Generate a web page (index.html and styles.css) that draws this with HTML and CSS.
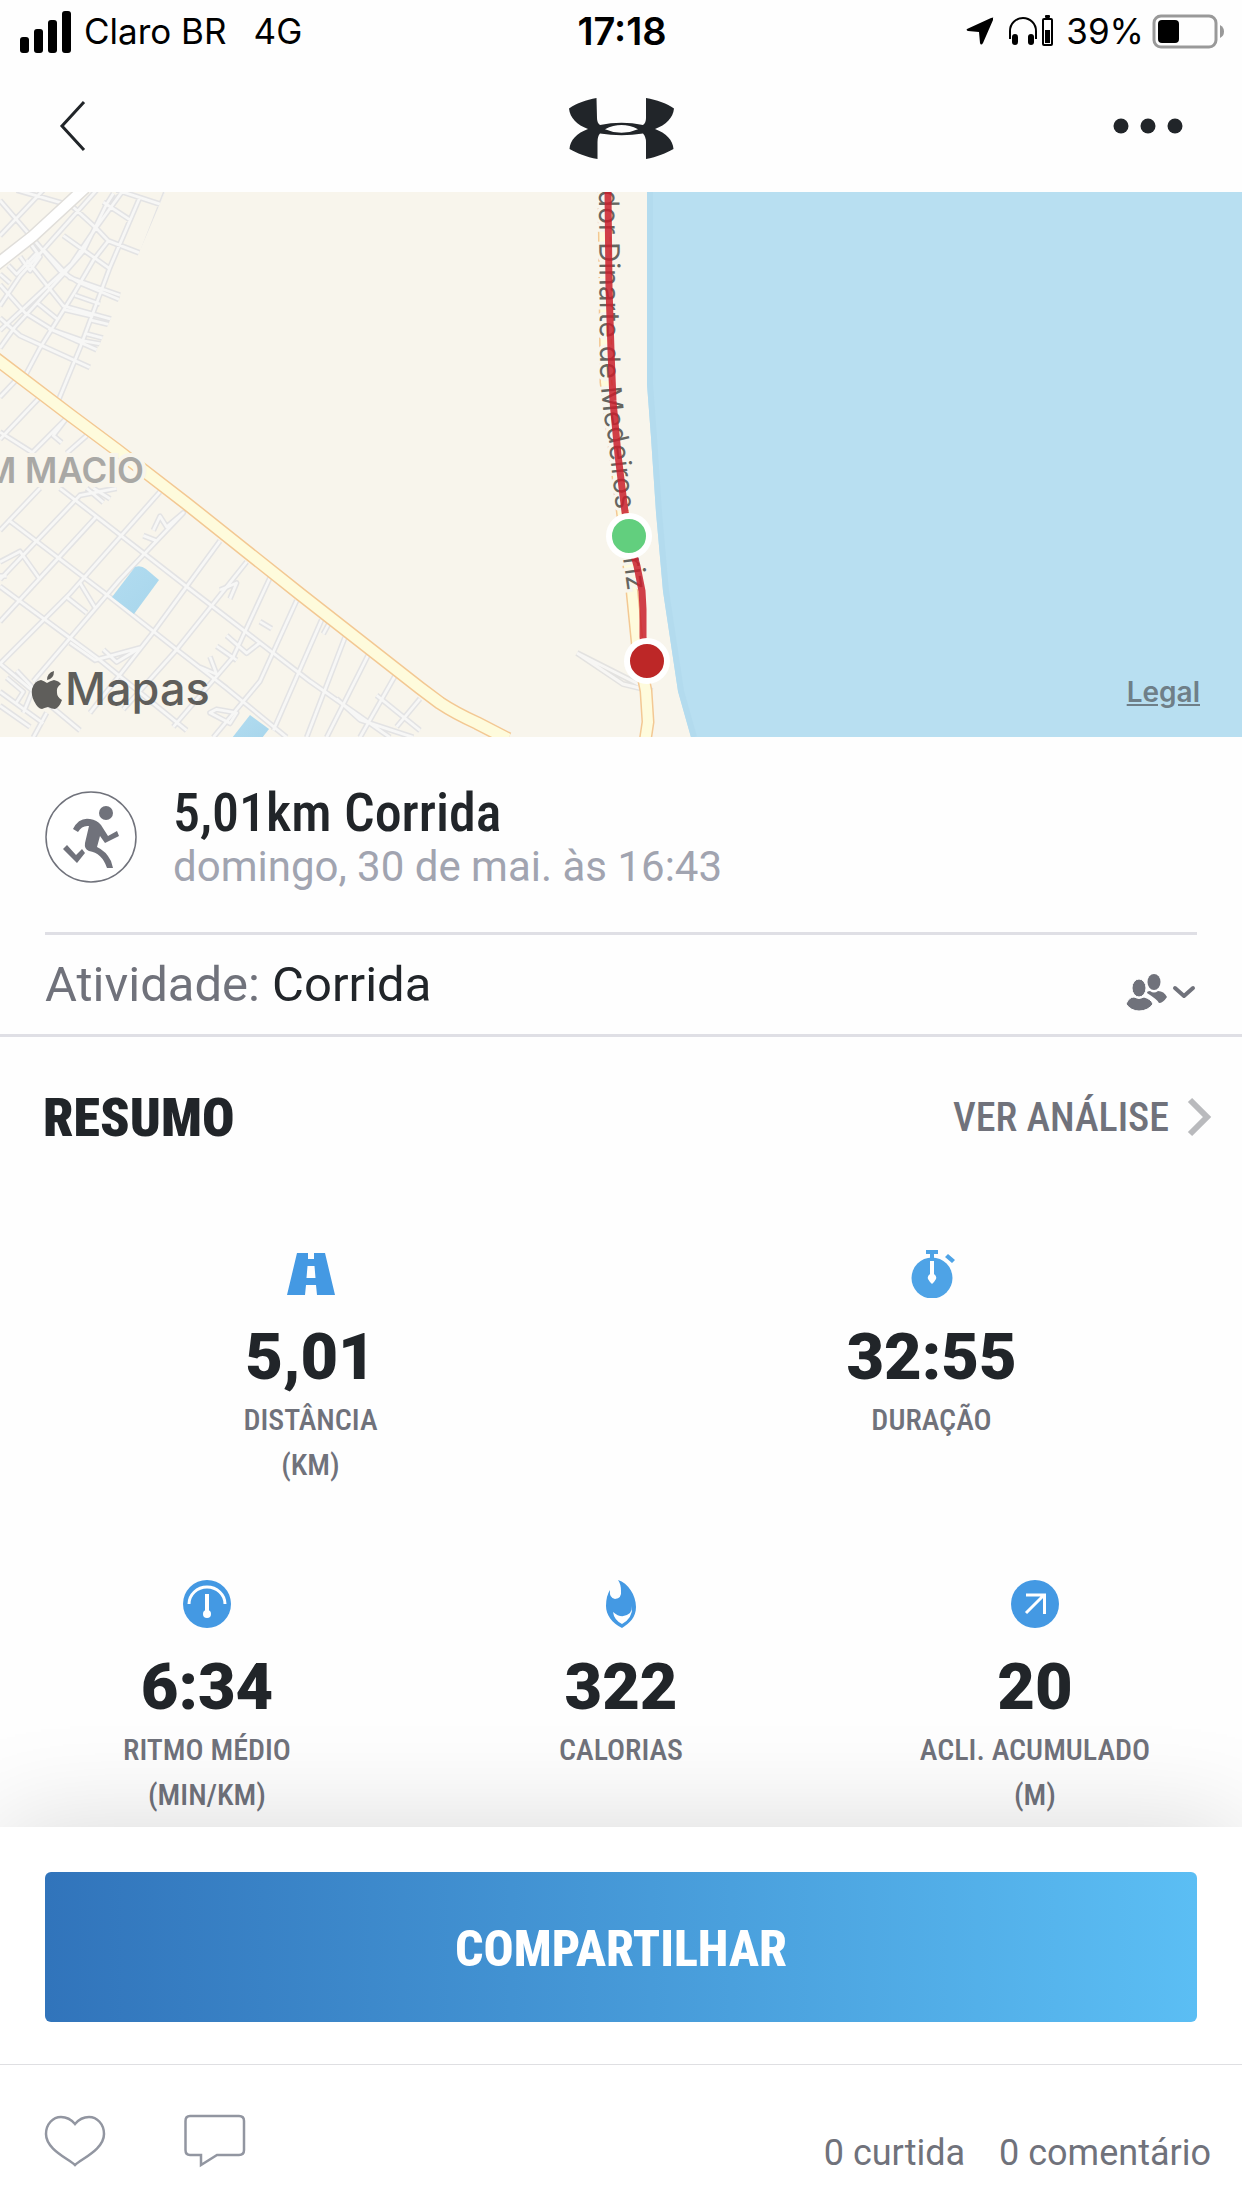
FILE: index.html
```html
<!DOCTYPE html>
<html lang="pt-BR">
<head>
<meta charset="utf-8">
<meta name="viewport" content="width=device-width, initial-scale=1">
<title>5,01km Corrida</title>
<link rel="stylesheet" href="styles.css">
</head>
<body>
<div class="status">
  <div class="status-left">
    <svg width="51" height="43" viewBox="0 0 51 43" aria-hidden="true"><rect x="0" y="27" width="9" height="16" rx="3"/><rect x="14" y="19" width="9" height="24" rx="3"/><rect x="28" y="10" width="9" height="33" rx="3"/><rect x="42" y="1" width="9" height="42" rx="3"/></svg>
    <span>Claro BR</span><span class="network">4G</span>
  </div>
  <time class="clock">17:18</time>
  <div class="status-right">
    <svg width="28" height="28" viewBox="0 0 28 28" aria-hidden="true"><path d="M27 1Q28 0 25 1L1 12Q0 13 2 14L13 15L14 26Q15 29 17 26L27 3Z"/></svg>
    <svg class="headphones" width="46" height="32" viewBox="0 0 46 32" aria-hidden="true"><path d="M2 24V16a13 13 0 0 1 26 0v8" fill="none" stroke="#000" stroke-width="2"/><rect x="4" y="19" width="6" height="11" rx="3"/><rect x="20" y="19" width="6" height="11" rx="3"/><rect x="35" y="4" width="9" height="26" rx="1" fill="none" stroke="#000" stroke-width="2"/><rect x="37" y="15" width="5" height="13"/><rect x="37" y="0" width="5" height="3" rx="1"/></svg>
    <span>39%</span>
    <svg width="72" height="35" viewBox="0 0 72 35" aria-hidden="true"><rect x="2" y="2" width="62" height="31" rx="7" fill="none" stroke="#999" stroke-width="3"/><rect x="6" y="6" width="21" height="23" rx="4"/><path d="M68 11q4 2 4 6.500t-4 6.500z" fill="#999"/></svg>
  </div>
</div>
<header class="nav">
  <button class="icon-button back" aria-label="Voltar"><svg width="28" height="52" viewBox="0 0 28 52"><path d="M25 2L3 26L25 50" fill="none" stroke="#212529" stroke-width="3"/></svg></button>
  <svg class="logo" width="105" height="61" viewBox="0 0 105 61" role="img" aria-label="Under Armour"><path fill="#212529" fill-rule="evenodd" d="M27.500 0C17 2 8 5 0 10.500C1 20 8 27 19 31C8 35 1 42 .5 51C8 55 17 59 28.500 61V44Q28.500 38 31 35.500Q52.500 39 74 35.500Q77 39 77 44V61C88 59 97 55 104.500 51C104 42 97 35 86 31C97 27 104 20 105 10.500C97 5 88 2 77 0V20Q77 25 74 27Q52.500 22.500 31 27Q28 25 28 20ZM36 31.200Q52.500 23 69 31.200Q52.500 38.500 36 31.200Z"/></svg>
  <button class="icon-button more" aria-label="Mais opções"><svg width="70" height="16" viewBox="0 0 70 16" fill="#212529"><circle cx="8" cy="8" r="7.500"/><circle cx="35" cy="8" r="7.500"/><circle cx="62" cy="8" r="7.500"/></svg></button>
</header>
<main>
<section class="map" aria-label="Mapa do percurso">
<svg class="map-canvas" viewBox="0 0 1242 545">
  <defs>
    <g id="streets">
      <path d="M0 400L215 210L290 105L370 0M0 330L60 245L290 0M0 130L130 0M0 30L100 140L180 230L240 265L365 315M0 270L75 350L160 400L290 455M0 365L60 415L280 510M0 450L45 390L190 240L250 175L320 40L340 10M50 0L215 45L290 110L325 145L420 180M310 35L390 85M500 0L370 320L225 640M420 20L330 220L240 450L175 600M350 0L480 40M190 130L330 225M80 200L190 330L360 375M130 170L210 250L360 300M75 530L120 450L225 290L280 200L325 145M25 215L50 240L110 180M0 240L30 265M90 150L120 190L90 230L60 190M110 320L175 370M145 395L250 430L310 440M270 370L335 385M260 410L320 425M190 340L280 360M225 300L300 325"/>
      <path d="M0 590L60 530M0 710L120 590M95 750L200 650L160 700L185 720M200 750L260 700M0 690L100 750M0 970L120 850M0 1110L240 870L350 850M0 1230L290 930M0 1350L210 1150L480 860M100 1400L360 1110L550 920L500 960L480 930L460 970M430 985L470 1000M270 1490L460 1260L660 1000M370 1480L530 1310L740 1060M520 1530L700 1330L810 1105M640 1560L780 1400L890 1170M820 1540L965 1225M920 1560L1035 1275M980 1560L1105 1325M1080 1560L1185 1385M1190 1530L1260 1450"/>
      <path d="M180 850L560 1130L930 1400L1170 1560M25 940L330 1160L530 1310L680 1420L860 1560M0 1060L60 1030L120 1110M0 1130L300 1340L560 1540M0 1350L240 1540M0 1100L20 1100M200 1160L260 1205M240 1120L285 1190M210 1290L285 1340L420 1305L350 1345L310 1310M280 850L330 880M260 850L310 890M680 1270L740 1320L780 1290M650 1300L710 1340M660 1140L710 1120L690 1165M780 1230L815 1250M970 1265L990 1230M630 1490L690 1520L710 1490L650 1480ZM600 1360L650 1380L630 1330M1010 1450L1080 1510L1240 1560M1130 1440L1260 1540M0 1430L130 1520M20 1390L70 1430L50 1460M50 1370L100 1420L70 1490M0 1470L90 1530M140 1490L100 1560"/>
    </g>
    <path id="diagonal" d="M-5 166L70 223L117 258L187 312L300 402L420 496L440 511Q455 521 477 531L508 547"/>
    <path id="coastal" d="M604 0L606 190L620 300L632 399L638 459L646 499L648 530L645 550"/>
    <path id="pier" d="M577 461L623 492L652 499L577 461"/>
    <path id="road-label" d="M599 -2L600 174Q602 220 608 245L616 315L632 430"/>
    <clipPath id="inland"><path d="M0 0H165L72 217L120 254L430 512L500 545H0Z"/></clipPath>
    <linearGradient id="pool" x2="1" y2="1"><stop stop-color="#b2dcf0"/><stop offset="1" stop-color="#a8d6ec"/></linearGradient>
  </defs>
  <rect width="1242" height="545" fill="#f8f5ec"/>
  <path d="M647 0V192L651 245L656 320L663 399L678 499L691 545H1242V0Z" fill="#b8dff1"/>
  <path d="M650 0V192L654 245L659 320L666 399L681 499L694 545" fill="none" stroke="#b3dbee" stroke-width="6"/>
  <g clip-path="url(#inland)" fill="none" stroke-linejoin="round">
    <use href="#streets" transform="translate(0 -2) scale(.3333 .3509)" stroke="#e3e3e4" stroke-width="17"/>
    <use href="#streets" transform="translate(0 -2) scale(.3333 .3509)" stroke="#f7f7f6" stroke-width="8"/>
  </g>
  <path d="M112 405L135 375Q141 373 146 377L159 388L134 422Z" fill="url(#pool)"/>
  <path d="M232 546L250 523L269 537L262 546Z" fill="url(#pool)"/>
  <g fill="none">
    <path d="M-4 73L33 44L85 -4" stroke="#e0deda" stroke-width="13"/>
    <path d="M-4 73L33 44L85 -4" stroke="#fff" stroke-width="10"/>
    <use href="#pier" stroke="#e3e2e0" stroke-width="6"/><use href="#pier" stroke="#f7f6f4" stroke-width="3"/>
    <use href="#diagonal" stroke="#f3c893" stroke-width="14"/><use href="#diagonal" stroke="#fefbdc" stroke-width="11"/>
    <use href="#coastal" stroke="#f3c893" stroke-width="13"/><use href="#coastal" stroke="#fefbdc" stroke-width="10"/>
  </g>
  <text class="district" x="-16" y="291">M MACIO</text>
  <text class="road"><textPath href="#road-label">dor Dinarte de Medeiros Mariz</textPath></text>
  <path d="M608 0L609 95L611 159L613 209L618 263L625 320L629 345L637 374L642 399L643 417L643 445L646 469" fill="none" stroke="#c91e2b" stroke-opacity=".85" stroke-width="7"/>
  <g stroke="#fff" stroke-width="6"><circle cx="629" cy="344" r="20" fill="#62cf7e"/><circle cx="647" cy="469" r="20" fill="#bd2727"/></g>
  <g fill="#5f5e5b"><path d="M54 479Q54 487 47 488Q47 481 54 479ZM47 491Q50 489 54 488Q59 489 61 492Q56 495 57 501Q57 505 62 508Q59 516 55 517Q52 517 48 515Q44 516 42 517Q38 517 34 509Q31 503 32 497Q34 489 41 488Q44 489 47 491Z"/><text class="brand" x="65" y="513">Mapas</text></g>
</svg>
<a class="legal" href="#legal">Legal</a>
</section>

<section class="workout">
  <svg width="92" height="92" viewBox="0 0 92 92" aria-hidden="true"><circle cx="46" cy="46" r="45" fill="#fff" stroke="#70727b" stroke-width="1.500"/><g fill="#70727b"><circle cx="61" cy="22" r="7"/><path d="M28 38Q34 26 45 28Q52 29 56 34L63 45L72 40L74 45L60 52L55 45L52 56Q61 60 66 70L68 77H62Q57 62 44 60Q39 58 40 52L44 35Q37 34 33 41Z"/><path d="M18 58L22 54L31 64L37 58L40 62L32 72Z"/></g></svg>
  <div class="workout-text"><h1>5,01km Corrida</h1><p>domingo, 30 de mai. às 16:43</p></div>
</section>
<section class="activity">
  <p>Atividade: <strong>Corrida</strong></p>
  <button class="icon-button privacy" aria-label="Privacidade"><svg width="72" height="38" viewBox="-2 0 72 38"><g fill="#70727b"><ellipse cx="27" cy="9" rx="6.500" ry="8"/><path d="M20 20Q31 27 32 30Q36 30 40 24Q37 18 31 18Q27 21 23 18Q20 18 20 20Z"/><g stroke="#fff"><ellipse cx="12" cy="15" rx="7" ry="9"/><path d="M-1 31Q2 24 7 24Q12 27 17 24Q24 26 26 31Q21 38 12 38Q4 38-1 31Z"/></g></g><path d="M48 15L57 23L66 15" fill="none" stroke="#70727b" stroke-width="4" stroke-linecap="round" stroke-linejoin="round"/></svg></button>
</section>

<section class="summary">
  <div class="summary-head"><h2>Resumo</h2><a href="#analise">Ver análise<svg width="25" height="40" viewBox="0 0 25 40" aria-hidden="true"><path d="M3 3L20 20L3 37" fill="none" stroke="#b9babd" stroke-width="6"/></svg></a></div>
  <div class="stats stats-two">
    <div class="stat"><svg width="48" height="48" viewBox="0 0 48 48" aria-hidden="true"><path fill="#4499e3" fill-rule="evenodd" d="M10 3H21V9H27V3H38L48 45H30L29 35H19L18 45H0ZM20.500 16L19.500 28H28.500L27.500 16Z"/></svg><b>5,01</b><span>Distância<br>(km)</span></div>
    <div class="stat"><svg width="48" height="48" viewBox="0 0 48 48" aria-hidden="true"><g fill="#4ea3e6"><circle cx="24" cy="28" r="20.500"/><path d="M18 0H30V4H26V9H22V4H18ZM40 4L47 10L44 13L37 7Z"/></g><path fill="#fff" d="M22 11H26V24Q29 26 28 29L26 32L24 34L22 32L20 29Q19 26 22 24Z"/></svg><b>32:55</b><span>Duração</span></div>
  </div>
  <div class="stats stats-three">
    <div class="stat"><svg width="48" height="48" viewBox="0 0 48 48" aria-hidden="true"><circle cx="24" cy="24" r="24" fill="#4499e3"/><path d="M6 24a18 17 0 0 1 36 0" fill="none" stroke="#fff" stroke-width="3"/><path d="M24 14V33" stroke="#fff" stroke-width="4"/><circle cx="24" cy="34" r="4" fill="#fff"/></svg><b>6:34</b><span>Ritmo médio<br>(min/km)</span></div>
    <div class="stat"><svg width="48" height="48" viewBox="0 0 48 48" aria-hidden="true"><path fill="#4499e3" d="M21 0C31 3 39 15 39 27C39 37 33 43 25 48C15 43 9 35 9 26Q9 16 13 10Q12 18 18 19Q25 18 24 11Q24 4 21 0Z"/><path fill="#fff" d="M16 32Q25 40 33 33Q35 30 35 26Q36 38 25 44Q17 40 16 32Z"/></svg><b>322</b><span>Calorias</span></div>
    <div class="stat"><svg width="48" height="48" viewBox="0 0 48 48" aria-hidden="true"><circle cx="24" cy="24" r="24" fill="#4499e3"/><path d="M15 15H33.500V34M33 15L15 33" fill="none" stroke="#fff" stroke-width="3"/></svg><b>20</b><span>Acli. acumulado<br>(m)</span></div>
  </div>
</section>
</main>
<footer class="sheet">
  <div class="share"><button class="share-button">Compartilhar</button></div>
  <div class="social">
    <div class="social-actions">
      <button class="icon-button" aria-label="Curtir"><svg width="62" height="54" viewBox="0 0 62 54"><path d="M31 10C26 4 22 3 17 3C9 3 2 10 2 20C2 35 23 44 31 51C39 44 60 35 60 20C60 10 53 3 45 3C40 3 36 4 31 10Z" fill="none" stroke="#9296a1" stroke-width="2.500"/></svg></button>
      <button class="icon-button" aria-label="Comentar"><svg width="62" height="54" viewBox="0 0 62 54"><path d="M6 2H55Q60 2 60 7V36Q60 41 55 41H33L17 51V41H6Q1.500 41 1.500 36V7Q1.500 2 6 2Z" fill="none" stroke="#9296a1" stroke-width="2.500"/></svg></button>
    </div>
    <div class="counts"><a href="#curtidas">0 curtida</a><a href="#comentarios">0 comentário</a></div>
  </div>
</footer>
</body>
</html>
```
FILE: styles.css
```css
* { box-sizing: border-box; }
body { margin: 0; min-height: 100vh; display: flex; flex-direction: column; background: #fefefe; color: #212529; font-family: Roboto, "Liberation Sans", sans-serif; }
main { flex: 1; }
h1, h2, p { margin: 0; font-weight: 400; }
svg { display: block; flex: none; }
a { color: inherit; text-decoration: none; }
.icon-button { border: 0; padding: 0; background: none; cursor: pointer; }

.status { display: grid; grid-template-columns: 1fr auto 1fr; align-items: center; height: 64px; padding: 0 18px 2px 20px; color: #000; font: 400 35px/40px Inter, sans-serif; }
.status-left, .status-right { display: flex; align-items: center; }
.status-left { gap: 13px; }
.network { margin-left: 14px; }
.clock { font-size: 38px; font-weight: 600; }
.status-right { justify-content: flex-end; gap: 8px; }
.headphones { margin: 0 4px 0 6px; }

.nav { display: grid; grid-template-columns: 1fr auto 1fr; align-items: center; height: 128px; padding: 0 59px 4px; }
.logo { margin-top: 4px; }
.back { justify-self: start; }
.more { justify-self: end; }

.map { position: relative; }
.map-canvas { width: 100%; height: auto; overflow: hidden; }
.district { font: 600 35px Inter, sans-serif; fill: #a9a8a5; stroke: #f8f5ec; stroke-width: 8px; paint-order: stroke; }
.road { font: 400 28px Inter, sans-serif; fill: #66655f; stroke: #f8f5ec; stroke-width: 6px; paint-order: stroke; }
.brand { font: 500 45px Inter, sans-serif; }
.legal { position: absolute; right: 42px; bottom: 28px; color: #6f7f88; font: 600 28px/34px Inter, sans-serif; text-decoration: underline; }

.workout { display: flex; align-items: center; gap: 36px; margin: 0 45px; padding: 46px 0 41px; border-bottom: 3px solid #dfdfe5; }
.workout-text h1 { font-family: "Roboto Condensed", Roboto, sans-serif; font-size: 54px; line-height: 60px; font-weight: 500; }
.workout-text p { font-size: 42px; line-height: 48px; color: #a1a4b0; }

.activity { display: flex; align-items: center; justify-content: space-between; padding: 0 45px; height: 102px; border-bottom: 3px solid #dfdfe5; font-size: 49px; line-height: 56px; color: #70727b; }
.activity strong { color: #212529; font-weight: 400; }
.privacy { padding-top: 14px; }

.summary-head { display: flex; align-items: center; justify-content: space-between; height: 160px; padding: 0 30px 0 43px; font-family: "Roboto Condensed", Roboto, sans-serif; text-transform: uppercase; }
.summary-head h2 { font-size: 54px; font-weight: 900; }
.summary-head a { display: flex; align-items: center; gap: 18px; font-size: 40px; font-weight: 500; color: #70727b; }
.stats { display: grid; padding-top: 53px; }
.stats-two { grid-template-columns: repeat(2, 1fr); }
.stats-three { grid-template-columns: repeat(3, 1fr); padding-top: 93px; }
.stat { display: flex; flex-direction: column; align-items: center; }
.stat b { margin-top: 19px; font-size: 65px; line-height: 80px; font-weight: 900; }
.stat span { font-family: "Roboto Condensed", Roboto, sans-serif; font-size: 30px; font-weight: 500; line-height: 45px; color: #70727b; text-align: center; text-transform: uppercase; }

.sheet { position: sticky; bottom: 0; background: #fff; box-shadow: 0 0 100px rgba(0, 0, 0, .15); }
.share { padding: 45px 45px 42px; }
.share-button { display: block; width: 100%; height: 150px; padding: 4px 0 0; border: 0; border-radius: 6px; background: linear-gradient(90deg, #3174bb, #5bbef4); color: #fff; font: 800 50px/56px "Roboto Condensed", Roboto, sans-serif; text-transform: uppercase; }
.social { display: flex; align-items: center; justify-content: space-between; height: 144px; padding: 8px 31px 0 44px; border-top: 1px solid #dfdfe2; }
.social-actions { display: flex; gap: 78px; }
.counts { display: flex; gap: 34px; padding-top: 24px; font-size: 36px; line-height: 44px; color: #70727b; }
```
